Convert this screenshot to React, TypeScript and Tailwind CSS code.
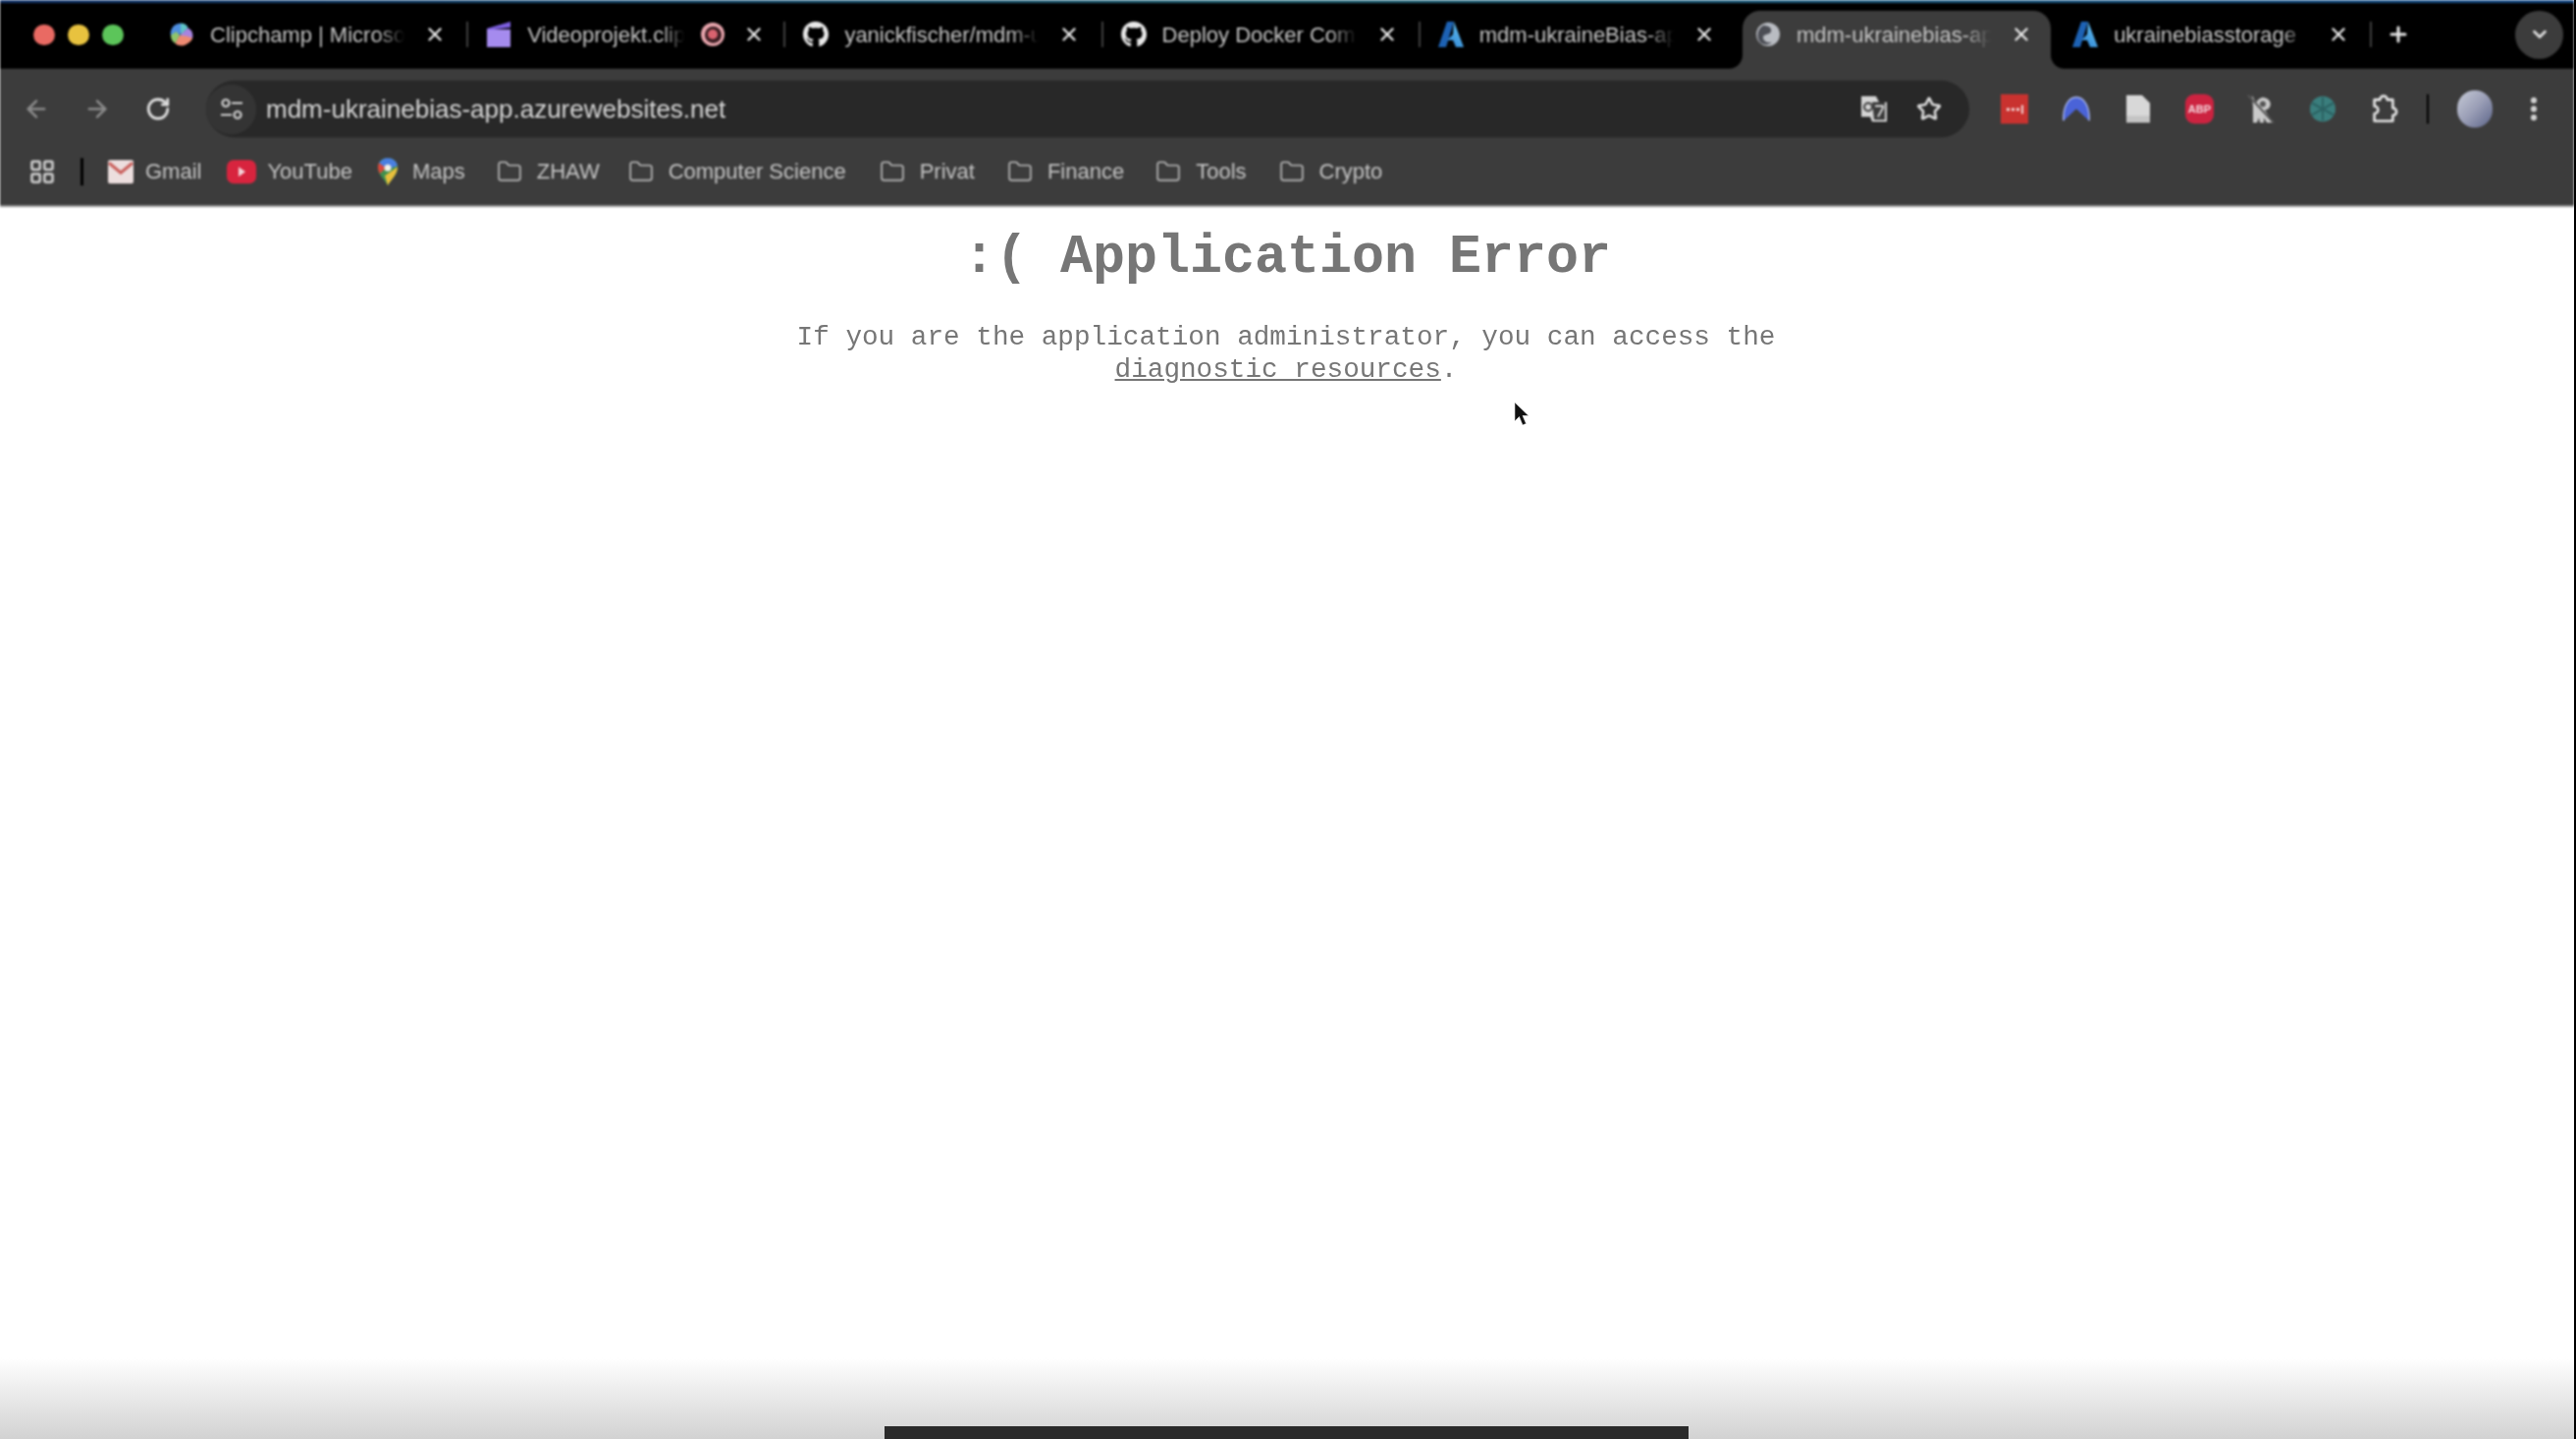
import React from "react";
import { FaGithub } from "react-icons/fa";
import { ArrowLeft, ArrowRight, RotateCw, Star, X, Plus, ChevronDown, Folder, LayoutGrid, EllipsisVertical } from "lucide-react";

const Azure = () => (
  <svg viewBox="0 0 26 28" className="w-[26px] h-[28px]">
    <defs>
      <linearGradient id="az1" x1="0" y1="1" x2="0.6" y2="0"><stop offset="0" stopColor="#2a7fd0" /><stop offset="1" stopColor="#63c0f2" /></linearGradient>
    </defs>
    <path d="M9 1h7L8 27H0z" fill="#1d62b4" />
    <path d="M16 1l10 26h-8l-3-7H9l6-6z" fill="url(#az1)" />
  </svg>
);
const Clipchamp = () => (
  <svg viewBox="0 0 28 28" className="w-[28px] h-[28px]">
    <path d="M2 15C1 8 6 2 13 2c4 0 7 2 8 5-4 0-8 3-9 8z" fill="#4f8fe0" />
    <path d="M13 2c4 0 7 2 8 5l-8 8z" fill="#5fc4c8" />
    <path d="M2 15c0 4 2 7 5 9 2-3 4-6 5-9l-4-4z" fill="#8fc46a" />
    <path d="M21 7c4 2 6 6 5 11l-7 5c-3-2-6-5-7-8z" fill="#a884e0" />
    <path d="M7 24c3 3 9 3 12 1 4-2 6-4 7-7l-7-2-7-1z" fill="#ee8a72" />
  </svg>
);
const ClipFile = () => (
  <svg viewBox="0 0 26 28" className="w-[26px] h-[28px]">
    <path d="M1 8l24-7v6L8 9h17v18H1z" fill="#7d5fe0" />
    <path d="M1 9h24v18H1z" fill="#a58bee" />
  </svg>
);
const Globe = () => (
  <svg viewBox="0 0 26 28" className="w-[26px] h-[28px]">
    <circle cx="13" cy="14" r="12" fill="#b9bcc2" />
    <path d="M8 5c5 0 9 2 8 6s-8 2-8 6 4 6 9 5c-3 3-8 3-11 1-5-4-5-14 2-18z" fill="#4c4e55" />
  </svg>
);
const Rec = () => (
  <div className="w-[24px] h-[24px] rounded-full bg-[#e9a6ae] flex items-center justify-center">
    <div className="w-[17px] h-[17px] rounded-full bg-[#3a1d22] flex items-center justify-center">
      <div className="w-[10px] h-[10px] rounded-full bg-[#d9636f]" />
    </div>
  </div>
);
const Gh = () => <FaGithub className="w-[28px] h-[28px] text-[#e8e8e8]" />;

const tabs = [
  { title: "Clipchamp | Microsoft Clipchamp", icon: <Clipchamp />, sep: true },
  { title: "Videoprojekt.clipchamp", icon: <ClipFile />, sep: true, rec: true },
  { title: "yanickfischer/mdm-ukrainebias", icon: <Gh />, sep: true },
  { title: "Deploy Docker Compose", icon: <Gh />, sep: true },
  { title: "mdm-ukraineBias-app", icon: <Azure />, sep: false },
  { title: "mdm-ukrainebias-app", icon: <Globe />, sep: false, active: true },
  { title: "ukrainebiasstorage", icon: <Azure />, sep: true },
];

const Tab = ({ t }: { t: (typeof tabs)[number] }) => (
  <div className="relative w-[323.2px] h-full shrink-0 flex items-center pl-[17px] pb-[3px]">
    {t.active && (
      <div className="absolute left-[4px] right-[5px] top-[8px] bottom-0 bg-[#3c3c3c] rounded-t-[18px]">
        <div className="absolute -left-[14px] bottom-0 w-[14px] h-[14px] bg-[#3c3c3c]">
          <div className="w-full h-full bg-black rounded-br-[14px]" />
        </div>
        <div className="absolute -right-[14px] bottom-0 w-[14px] h-[14px] bg-[#3c3c3c]">
          <div className="w-full h-full bg-black rounded-bl-[14px]" />
        </div>
      </div>
    )}
    <div className="relative w-[26px] flex justify-center shrink-0">{t.icon}</div>
    <div className={`relative ml-[16px] ${t.rec ? "w-[160px]" : "w-[198px]"} shrink-0 overflow-hidden whitespace-nowrap text-[22px] text-[#c4c4c4] [mask-image:linear-gradient(to_right,black_86%,transparent)]`}>
      {t.title}
    </div>
    {t.rec ? (
      <div className="relative ml-[17px] w-[24px] shrink-0"><Rec /></div>
    ) : null}
    <X className={`relative ${t.rec ? "ml-[19px]" : "ml-[20px]"} w-[22px] h-[22px] shrink-0 text-[#e6e6e6]`} strokeWidth={2.6} />
    {t.sep && <div className="absolute right-[1px] top-[19px] h-[26px] w-[2px] bg-[#3f3f3f]" />}
  </div>
);

const Ext = ({ children }: { children: React.ReactNode }) => (
  <div className="w-[62.7px] flex justify-center items-center shrink-0">{children}</div>
);

const FolderMark = ({ label, ml }: { label: string; ml: string }) => (
  <div className={`flex items-center gap-[14px] ${ml}`}>
    <Folder className="w-[28px] h-[26px] text-[#bdbdbd]" strokeWidth={1.5} />
    <span className="text-[22px] text-[#c4c4c4]">{label}</span>
  </div>
);

export default function App() {
  return (
    <div className="h-[1466px] w-full flex flex-col bg-white border-r-2 border-black font-['Liberation_Sans',Arial,sans-serif] relative overflow-hidden">
      <header className="shrink-0 blur-[0.9px]">
        <div className="h-[3px] bg-gradient-to-r from-[#15356b] via-[#2a6a7a] to-[#174a86]" />
        <div className="h-[67px] bg-black flex items-stretch">
          <div className="flex items-center gap-[13px] pl-[34px] pb-[3px] w-[155px] shrink-0">
            <div className="w-[22px] h-[21px] rounded-full bg-[#e96a63]" />
            <div className="w-[22px] h-[21px] rounded-full bg-[#e8c23f]" />
            <div className="w-[22px] h-[21px] rounded-full bg-[#5cc55a]" />
          </div>
          {tabs.map((t) => <Tab key={t.title} t={t} />)}
          <div className="flex items-center pb-[3px] ml-[14px]">
            <Plus className="w-[24px] h-[24px] text-[#e6e6e6]" strokeWidth={3} />
          </div>
          <div className="ml-auto mr-[11px] flex items-center pb-[3px]">
            <div className="w-[49px] h-[49px] rounded-full bg-[#3c3c3c] flex items-center justify-center">
              <ChevronDown className="w-[22px] h-[22px] text-[#dddddd]" strokeWidth={3} />
            </div>
          </div>
        </div>
        <div className="h-[70px] bg-[#3c3c3c] flex items-start pt-[12px] pl-[6px]">
          <div className="w-[62px] h-[58px] flex items-center justify-center"><ArrowLeft className="w-[28px] h-[28px] text-[#8a8a8a]" strokeWidth={2.2} /></div>
          <div className="w-[62px] h-[58px] flex items-center justify-center"><ArrowRight className="w-[28px] h-[28px] text-[#8a8a8a]" strokeWidth={2.2} /></div>
          <div className="w-[62px] h-[58px] flex items-center justify-center"><RotateCw className="w-[26px] h-[26px] text-[#dcdcdc]" strokeWidth={2.6} /></div>
          <div className="ml-[18px] w-[1796px] h-[58px] rounded-full bg-[#282828] flex items-center shrink-0 pr-[28px]">
            <div className="w-[51px] h-[51px] rounded-full bg-[#343434] flex items-center justify-center shrink-0">
              <svg viewBox="0 0 26 26" className="w-[26px] h-[26px]" fill="none" stroke="#d0d0d0" strokeWidth="2.2">
                <circle cx="7" cy="7" r="3.5" />
                <path d="M13 7h11M2 19h11" />
                <circle cx="19" cy="19" r="3.5" />
              </svg>
            </div>
            <span className="ml-[10px] text-[26px] text-[#d6d6d6]">mdm-ukrainebias-app.azurewebsites.net</span>
            <div className="ml-auto flex items-center gap-[28px]">
              <svg viewBox="0 0 30 30" className="w-[30px] h-[30px]">
                <path d="M2 2h15l3 6h8v20H13l-2-5H2z" fill="#d4d4d4" />
                <path d="M13 8h13v18H15z" fill="#3a3a3a" />
                <path d="M16 12h8v2l-5 9" stroke="#d4d4d4" strokeWidth="2" fill="none" />
                <circle cx="9" cy="13" r="4" stroke="#3a3a3a" strokeWidth="2" fill="none" />
              </svg>
              <Star className="w-[26px] h-[26px] text-[#dcdcdc]" strokeWidth={2.4} />
            </div>
          </div>
          <div className="ml-[15px] flex h-[58px] items-center shrink-0">
            <Ext><div className="w-[28px] h-[30px] bg-[#c9322f] flex items-center justify-center gap-[2px]">
              <div className="w-[3px] h-[3px] bg-[#f2d0d0]" /><div className="w-[3px] h-[3px] bg-[#f2d0d0]" /><div className="w-[3px] h-[3px] bg-[#f2d0d0]" /><div className="w-[2px] h-[9px] bg-[#f2d0d0]" />
            </div></Ext>
            <Ext><svg viewBox="0 0 30 28" className="w-[30px] h-[28px]"><path d="M2 26C1 12 7 2 15 2s14 10 13 24l-13-12z" fill="#4a63d8" /><path d="M2 26C1 12 7 2 15 2s14 10 13 24" stroke="#a8b6ee" strokeWidth="1.5" fill="none" /></svg></Ext>
            <Ext><svg viewBox="0 0 26 30" className="w-[26px] h-[30px]"><path d="M1 1h16l8 8v20H1z" fill="#d8d8d8" /><path d="M1 22h24v7H1z" fill="#c4c4c4" /></svg></Ext>
            <Ext><div className="w-[29px] h-[30px] rounded-[9px] bg-[#cc2340] flex items-center justify-center text-[11px] leading-none font-bold text-[#f4dbe0]">ABP</div></Ext>
            <Ext><svg viewBox="0 0 28 30" className="w-[28px] h-[30px]"><path d="M5 1l4 8c2-4 6-7 10-5 4 1 6 6 4 9-1 2-3 3-5 3l8 13h-6l-3-5v5h-4l-1-5-2 5H6V13z" fill="#c9c9c9" /><path d="M1 1l26 28" stroke="#555" strokeWidth="2" /><circle cx="16" cy="10" r="3" fill="#555" /></svg></Ext>
            <Ext><svg viewBox="0 0 28 28" className="w-[28px] h-[28px]"><circle cx="14" cy="14" r="13" fill="#3a7e7d" /><path d="M14 2v24M3 8l22 12M25 8L3 20" stroke="#2b6263" strokeWidth="2" /></svg></Ext>
            <Ext><svg viewBox="0 0 32 32" className="w-[30px] h-[30px]" fill="none" stroke="#e6e6e6" strokeWidth="2.8" strokeLinejoin="round"><path d="M6 6h6a4 4 0 0 1 8 0h6v9a4 4 0 0 1 0 8v6H6v-8a4 4 0 0 0 0-8z" /></svg></Ext>
            <div className="ml-[12px] w-[2px] h-[30px] bg-black" />
            <div className="ml-[29px] w-[36px] h-[38px] rounded-full bg-gradient-to-br from-[#c8ccd8] via-[#9a9eb6] to-[#5c6488] shrink-0" />
            <EllipsisVertical className="ml-[27px] w-[30px] h-[30px] text-[#dedede]" strokeWidth={2.8} />
          </div>
        </div>
        <div className="h-[71px] bg-[#3c3c3c] border-b-2 border-[#9a9a9a] flex items-center pl-[29px]">
          <LayoutGrid className="w-[28px] h-[28px] text-[#d0d0d0]" strokeWidth={2.2} />
          <div className="ml-[25px] w-[3px] h-[28px] bg-black" />
          <div className="ml-[25px] flex items-center gap-[12px]">
            <svg viewBox="0 0 26 24" className="w-[26px] h-[24px]"><rect width="26" height="24" rx="2" fill="#ecdede" /><path d="M1 3l12 10L25 3" stroke="#c9605c" strokeWidth="3" fill="none" /></svg>
            <span className="text-[22px] text-[#c4c4c4]">Gmail</span>
          </div>
          <div className="ml-[26px] flex items-center gap-[11px]">
            <div className="w-[30px] h-[24px] rounded-[7px] bg-[#d8243e] flex items-center justify-center">
              <div className="w-0 h-0 border-y-[5px] border-y-transparent border-l-[7px] border-l-[#f3d5da]" />
            </div>
            <span className="text-[22px] text-[#c4c4c4]">YouTube</span>
          </div>
          <div className="ml-[25px] flex items-center gap-[14px]">
            <svg viewBox="0 0 22 30" className="w-[22px] h-[30px]"><path d="M11 1C5 1 1 5 1 11c0 7 7 12 10 18 3-6 10-11 10-18 0-6-4-10-10-10z" fill="#3f8f4e" /><path d="M11 1C7 1 4 3 2 6l7 7 12-4c-1-5-5-8-10-8z" fill="#4a7fe0" /><path d="M2 6c-1 2-1 3-1 5 0 2 1 4 2 6l6-6z" fill="#d9483b" /><path d="M21 10l-13 9 3 10c3-6 10-11 10-19z" fill="#e8bf3c" /><circle cx="11" cy="11" r="3.5" fill="#f3f0e6" /></svg>
            <span className="text-[22px] text-[#c4c4c4]">Maps</span>
          </div>
          <FolderMark label="ZHAW" ml="ml-[31px]" />
          <FolderMark label="Computer Science" ml="ml-[28px]" />
          <FolderMark label="Privat" ml="ml-[33px]" />
          <FolderMark label="Finance" ml="ml-[32px]" />
          <FolderMark label="Tools" ml="ml-[31px]" />
          <FolderMark label="Crypto" ml="ml-[32px]" />
        </div>
      </header>
      <main className="flex-1 flex flex-col items-center pt-[21px] text-[#767676] font-['Liberation_Mono',monospace] blur-[0.7px]">
        <h1 className="text-[55px] leading-[62px] font-bold">:( Application Error</h1>
        <p className="mt-[34px] w-[1010px] text-center text-[27.7px] leading-[32.5px] -translate-x-[1px]">
          If you are the application administrator, you can access the <a className="underline" href="#">diagnostic resources</a>.
        </p>
      </main>
      <footer className="shrink-0 h-[83px] flex flex-col justify-end items-center bg-gradient-to-b from-white to-[#d2d2d2]">
        <div className="w-[819px] h-[13px] bg-[#2a2a2a] -translate-x-[1px]" />
      </footer>
      <svg viewBox="0 0 16 26" className="absolute left-[1542px] top-[409px] w-[16px] h-[26px]">
        <path d="M1 1v19l4.5-4.5L9 24l3.5-1.5-3.5-8H15z" fill="#111111" stroke="#dddddd" strokeWidth="0.6" />
      </svg>
    </div>
  );
}
